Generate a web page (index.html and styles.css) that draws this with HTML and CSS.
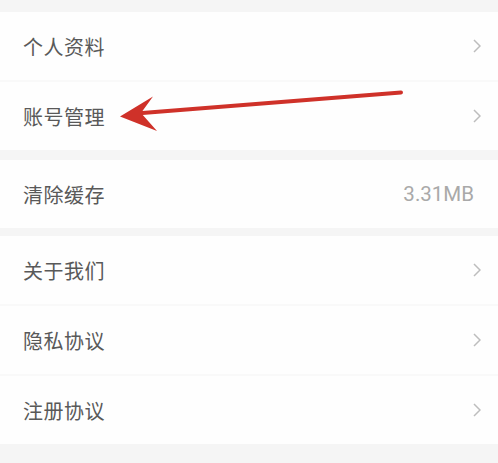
FILE: index.html
```html
<!DOCTYPE html>
<html lang="zh-CN">
<head>
  <meta charset="UTF-8">
  <meta name="viewport" content="width=device-width, initial-scale=1.0">
  <title>设置</title>
  <link rel="stylesheet" href="styles.css">
</head>
<body>

<div class="page">
  <div class="group">
    <div class="row"><span class="label">个人资料</span><svg class="chev" viewBox="0 0 8 14"><polyline points="1,1 7,7 1,13"/></svg></div>
    <div class="row"><span class="label">账号管理</span><svg class="chev" viewBox="0 0 8 14"><polyline points="1,1 7,7 1,13"/></svg></div>
  </div>

  <div class="group">
    <div class="row"><span class="label">清除缓存</span><span class="value">3.31MB</span></div>
  </div>

  <div class="group">
    <div class="row"><span class="label">关于我们</span><svg class="chev" viewBox="0 0 8 14"><polyline points="1,1 7,7 1,13"/></svg></div>
    <div class="row"><span class="label">隐私协议</span><svg class="chev" viewBox="0 0 8 14"><polyline points="1,1 7,7 1,13"/></svg></div>
    <div class="row"><span class="label">注册协议</span><svg class="chev" viewBox="0 0 8 14"><polyline points="1,1 7,7 1,13"/></svg></div>
  </div>

  <!-- annotation arrow drawn over the list -->
  <svg class="arrow" viewBox="0 0 498 463">
    <line x1="401" y1="92.5" x2="136" y2="113.5" stroke="#cf3129" stroke-width="4" stroke-linecap="round"/>
    <polygon points="120,116.5 153,96.5 141,113 157,131" fill="#cf3129"/>
  </svg>
</div>

</body>
</html>
```

FILE: styles.css
```css
body {
  margin: 0;
  background-color: #f5f5f5;
  font-family: "Noto Sans CJK SC", "Noto Sans", sans-serif;
}
.page {
  position: relative;
  padding-top: 12px;
  min-height: 463px;
  box-sizing: border-box;
}
.group {
  display: flex;
  flex-direction: column;
  gap: 2px;
  background-color: #f9f9f9;
  margin-bottom: 8px;
}
.group:first-child {
  margin-bottom: 10px;
}
.row {
  height: 68px;
  display: flex;
  align-items: center;
  justify-content: space-between;
  padding: 0 17px 0 23px;
  background-color: #fefefe;
}
.label {
  font-size: 20px;
  color: #595959;
  letter-spacing: 0.5px;
}
.value {
  font-family: Roboto, sans-serif;
  font-size: 20.5px;
  color: #a9a9a9;
  margin-right: 7px;
}
.chev {
  width: 8px;
  height: 14px;
  fill: none;
  stroke: #bdbdbd;
  stroke-width: 1.5;
}
.arrow {
  position: absolute;
  left: 0;
  top: 0;
  width: 498px;
  height: 463px;
}
```
